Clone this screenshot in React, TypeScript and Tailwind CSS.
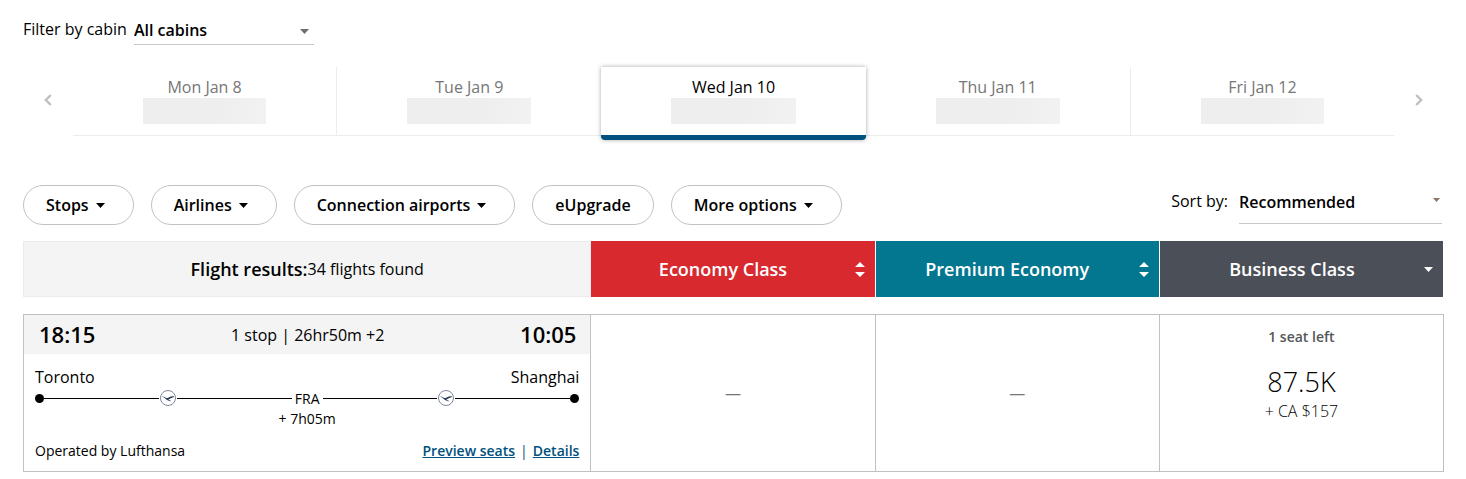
import { useState } from "react";
import type { ReactNode } from "react";

type IconProps = { className?: string };

function CaretDown({ className = "h-[5px] w-[9px]" }: IconProps) {
  return (
    <svg viewBox="0 0 10 5" className={className} fill="currentColor" preserveAspectRatio="none" aria-hidden="true">
      <path d="M0 0h10L5 5z" />
    </svg>
  );
}

function SortArrows() {
  return (
    <svg viewBox="0 0 10 15" className="h-[15px] w-[10px]" fill="currentColor" aria-hidden="true">
      <path d="M5 0l5 5H0zM0 10h10l-5 5z" />
    </svg>
  );
}

function Chevron({ className = "" }: IconProps) {
  return (
    <svg viewBox="0 0 8 12" className={`h-3 w-2 ${className}`} fill="none" stroke="currentColor" strokeWidth="2.4" aria-hidden="true">
      <path d="M6.800 1L1.800 6l5 5" />
    </svg>
  );
}

function LufthansaLogo() {
  return (
    <svg viewBox="0 0 16 16" className="mx-px size-4 shrink-0" role="img" aria-label="Lufthansa">
      <circle cx="8" cy="8" r="7.5" fill="#fff" stroke="#7d8699" strokeWidth="1" />
      <path
        d="M1.800 6.200c1.700.3 3.200 1.200 4.600 1.700.9.300 1.600.2 2.300-.3 1.400-1 2.800-1.300 5.300-1.300l-.4.9-1.300.2-.3.600-1.300.1-.3.600-1.100.2c-.2.500-.5.800-1 .9l2.900 1.100-.6.300C8.800 11 7.300 10.500 6.100 9.300 5.100 8.300 3.600 7.100 1.800 6.200z"
        fill="#2c3a5c"
      />
    </svg>
  );
}

const days = ["Mon Jan 8", "Tue Jan 9", "Wed Jan 10", "Thu Jan 11", "Fri Jan 12"];

const filters = [
  { label: "Stops", menu: true },
  { label: "Airlines", menu: true },
  { label: "Connection airports", menu: true },
  { label: "eUpgrade", menu: false },
  { label: "More options", menu: true },
];

function DateStrip() {
  const [selected, setSelected] = useState(2);
  return (
    <nav aria-label="Departure date" className="mt-[22px] flex h-[69px]">
      <button type="button" aria-label="Previous dates" className="flex w-[50px] items-center justify-center pb-[3px] text-[#bdbfc3]">
        <Chevron />
      </button>
      <ul className="grid flex-1 grid-cols-5">
        {days.map((day, i) => (
          <li
            key={day}
            className={
              i === selected
                ? "relative z-10 -mb-1 rounded-b-sm border-b-[5px] border-[#00517d] bg-white shadow-[0_0_4px_rgba(0,0,0,0.35)]"
                : i >= selected - 1 && i <= selected + 1
                  ? "border-b border-[#ececec]"
                  : i < selected
                    ? "border-r border-b border-[#ececec]"
                    : "border-b border-l border-[#ececec]"
            }
          >
            <button
              type="button"
              onClick={() => setSelected(i)}
              className={`flex h-full w-full flex-col items-center pt-[9px] leading-[22px] ${i === selected ? "text-black" : "text-[#767676]"}`}
            >
              {day}
              <span className="h-[26px] w-[47%] bg-linear-to-r from-[#eeeeee] from-60% to-[#f2f2f2]" />
            </button>
          </li>
        ))}
      </ul>
      <button type="button" aria-label="Next dates" className="flex w-[50px] items-center justify-center pb-[3px] text-[#bdbfc3]">
        <Chevron className="rotate-180" />
      </button>
    </nav>
  );
}

function ClassHeader({ title, color, icon }: { title: string; color: string; icon: ReactNode }) {
  return (
    <th scope="col" className={`h-14 border-r border-white bg-clip-padding p-0 ${color}`}>
      <button type="button" className="flex h-full w-full items-center pr-[10px] text-lg font-semibold text-white">
        <span className="flex-1 text-center">{title}</span>
        {icon}
      </button>
    </th>
  );
}

function Line() {
  return <span className="h-px flex-1 bg-black" />;
}

function Itinerary() {
  return (
    <>
      <div className="flex h-[39px] items-center justify-between bg-[#f4f4f4] pr-[14px] pl-[15px]">
        <time className="text-[22px] font-semibold">18:15</time>
        <span>1 stop | 26hr50m +2</span>
        <time className="text-[22px] font-semibold">10:05</time>
      </div>
      <div className="px-[11px] pt-3 pb-[10px]">
        <div className="flex justify-between leading-[22px]">
          <span>Toronto</span>
          <span>Shanghai</span>
        </div>
        <div className="flex h-5 items-center">
          <span className="size-[9px] rounded-full bg-black" />
          <Line />
          <LufthansaLogo />
          <Line />
          <span className="px-[3px] pt-[2px] text-sm leading-[18px]">FRA</span>
          <Line />
          <LufthansaLogo />
          <Line />
          <span className="size-[9px] rounded-full bg-black" />
        </div>
        <div className="mt-px text-center text-sm leading-5">+ 7h05m</div>
        <div className="mt-3 flex justify-between text-sm leading-5">
          <span>Operated by Lufthansa</span>
          <span className="flex gap-[5px] font-semibold text-[#00517d]">
            <a href="#seats" className="underline">Preview seats</a>
            <span className="font-normal">|</span>
            <a href="#details" className="underline">Details</a>
          </span>
        </div>
      </div>
    </>
  );
}

export default function App() {
  return (
    <main className="bg-white pt-4 pr-[22px] pb-[7px] pl-[23px] font-['Open_Sans','Noto_Sans',sans-serif] text-base text-black">
      <div className="flex">
        <label htmlFor="cabin" className="mr-[7px] leading-[27px]">
          Filter by cabin
        </label>
        <div className="relative w-[180px]">
          <select id="cabin" className="h-[29px] w-full appearance-none border-b border-[#c8c8c8] bg-transparent font-semibold">
            <option>All cabins</option>
            <option>Economy</option>
            <option>Premium Economy</option>
            <option>Business</option>
          </select>
          <CaretDown className="pointer-events-none absolute top-[13px] right-[5px] h-[5px] w-[9px] text-[#6f6f6f]" />
        </div>
      </div>

      <DateStrip />

      <div className="mt-[49px] flex justify-between">
        <div className="flex gap-[17px]">
          {filters.map((f) => (
            <button
              key={f.label}
              type="button"
              className="flex h-10 items-center rounded-full border border-[#c2c2c4] px-[22px] font-semibold"
            >
              {f.label}
              {f.menu && <CaretDown className="mr-[6px] ml-[7px] h-[5px] w-[9px]" />}
            </button>
          ))}
        </div>
        <div className="mr-[2px] flex">
          <label htmlFor="sort" className="mr-[11px] leading-8">
            Sort by:
          </label>
          <div className="relative w-[203px]">
            <select id="sort" className="h-[39px] w-full appearance-none border-b border-[#c8c8c8] bg-transparent pb-1 font-semibold">
              <option>Recommended</option>
              <option>Price</option>
              <option>Duration</option>
            </select>
            <CaretDown className="pointer-events-none absolute top-[13px] right-[2px] h-1 w-[7px] text-[#8a7768]" />
          </div>
        </div>
      </div>

      <table className="mt-4 w-full table-fixed border-separate border-spacing-0">
        <thead>
          <tr>
            <th scope="col" className="h-14 w-2/5 border border-[#ebebeb] bg-[#f4f4f4] p-0 font-normal">
              <span className="flex items-center justify-center">
                <span className="text-lg font-semibold">Flight results:</span>34 flights found
              </span>
            </th>
            <ClassHeader title="Economy Class" color="bg-[#d8292f]" icon={<SortArrows />} />
            <ClassHeader title="Premium Economy" color="bg-[#047790]" icon={<SortArrows />} />
            <ClassHeader title="Business Class" color="bg-[#4b4f57]" icon={<CaretDown />} />
          </tr>
        </thead>
        <tbody className="before:block before:h-[17px] before:content-['']">
          <tr>
            <td className="border border-[#c0c1c3] p-0">
              <Itinerary />
            </td>
            <td className="border-y border-r border-[#c0c1c3] p-0 text-center text-[#767676]">—</td>
            <td className="border-y border-r border-[#c0c1c3] p-0 text-center text-[#767676]">—</td>
            <td className="border-y border-r border-[#c0c1c3] p-0 pt-3 text-center align-top">
              <div className="text-sm leading-5 font-semibold text-[#54585a]">1 seat left</div>
              <div className="mt-[17px] text-[27px] leading-9 font-light">87.5K</div>
              <div className="leading-[22px] font-light">+ CA $157</div>
            </td>
          </tr>
        </tbody>
      </table>
    </main>
  );
}
